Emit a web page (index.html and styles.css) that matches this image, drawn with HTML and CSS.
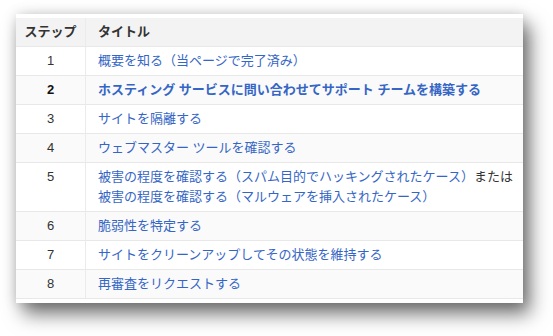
FILE: index.html
```html
<!DOCTYPE html>
<html lang="ja">
<head>
    <meta charset="UTF-8">
    <meta name="viewport" content="width=device-width, initial-scale=1.0">
    <title>ハッキングされたサイトの修復</title>
    <link rel="stylesheet" href="styles.css">
</head>
<body>
    <div class="card">
        <table class="steps">
            <thead>
                <tr>
                    <th class="num">ステップ</th>
                    <th>タイトル</th>
                </tr>
            </thead>
            <tbody>
                <tr>
                    <td class="num">1</td>
                    <td><a href="#">概要を知る（当ページで完了済み）</a></td>
                </tr>
                <tr class="current">
                    <td class="num">2</td>
                    <td><a href="#">ホスティング サービスに問い合わせてサポート チームを構築する</a></td>
                </tr>
                <tr>
                    <td class="num">3</td>
                    <td><a href="#">サイトを隔離する</a></td>
                </tr>
                <tr>
                    <td class="num">4</td>
                    <td><a href="#">ウェブマスター ツールを確認する</a></td>
                </tr>
                <tr>
                    <td class="num">5</td>
                    <td><a href="#">被害の程度を確認する（スパム目的でハッキングされたケース）</a>または<br><a href="#">被害の程度を確認する（マルウェアを挿入されたケース）</a></td>
                </tr>
                <tr>
                    <td class="num">6</td>
                    <td><a href="#">脆弱性を特定する</a></td>
                </tr>
                <tr>
                    <td class="num">7</td>
                    <td><a href="#">サイトをクリーンアップしてその状態を維持する</a></td>
                </tr>
                <tr>
                    <td class="num">8</td>
                    <td><a href="#">再審査をリクエストする</a></td>
                </tr>
            </tbody>
        </table>
    </div>
</body>
</html>
```

FILE: styles.css
```css
body {
    margin: 0;
    height: 336px;
    background: #ffffff;
    font-family: "Liberation Sans", "Noto Sans CJK JP", sans-serif;
    font-size: 13px;
    color: #333333;
}

.card {
    width: 507px;
    margin: 14px 0 0 16px;
    padding: 4px 0;
    background: #ffffff;
    box-shadow: 0 0 12px rgba(0, 0, 0, 0.15), 7px 11px 18px rgba(0, 0, 0, 0.55);
}

.steps {
    width: 100%;
    border-collapse: collapse;
    table-layout: fixed;
}

.steps th,
.steps td {
    padding: 4px 12px;
    line-height: 20px;
    text-align: left;
    vertical-align: top;
    border-bottom: 1px solid #e8e8e8;
    white-space: nowrap;
}

.steps th {
    background: #f3f3f3;
    font-weight: bold;
    color: #333333;
}

.steps .num {
    width: 57px;
    padding-left: 6px;
    padding-right: 6px;
    text-align: center;
    border-right: 1px solid #ebebeb;
}

.steps tbody tr:nth-child(even) {
    background: #fafafa;
}

.steps a {
    color: #3566c5;
    text-decoration: none;
}

/* current step */
.current td {
    font-weight: bold;
    color: #111111;
}
```
